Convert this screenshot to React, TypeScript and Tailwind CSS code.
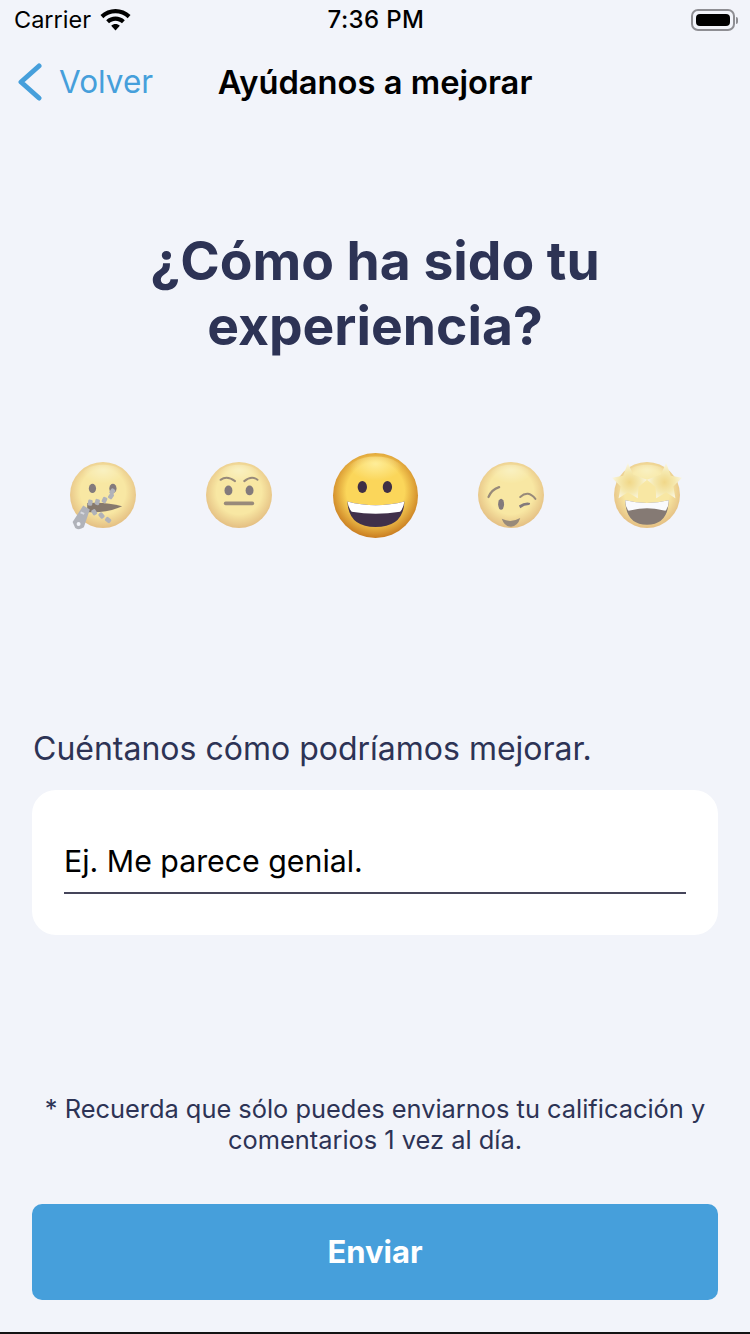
const Face = ({ children, id, top = "#fde06a", bottom = "#dc9c34" }: { children: React.ReactNode; id: string; top?: string; bottom?: string }) => (
  <svg viewBox="0 0 100 100" className="w-full h-full overflow-visible">
    <defs>
      <radialGradient id={id} cx="50%" cy="45%" r="55%">
        <stop offset="0%" stopColor={top} />
        <stop offset="62%" stopColor={top} />
        <stop offset="100%" stopColor={bottom} />
      </radialGradient>
      <radialGradient id={`${id}-shine`} cx="50%" cy="20%" r="45%">
        <stop offset="0%" stopColor="#fff3a8" stopOpacity="0.8" />
        <stop offset="100%" stopColor="#fff3a8" stopOpacity="0" />
      </radialGradient>
    </defs>
    <circle cx="50" cy="50" r="50" fill={`url(#${id})`} />
    <ellipse cx="50" cy="26" rx="36" ry="22" fill={`url(#${id}-shine)`} />
    {children}
  </svg>
)

const ZipperFace = () => (
  <Face id="zip">
    <ellipse cx="34" cy="40" rx="5.5" ry="7" fill="#3a2a2a" />
    <ellipse cx="65" cy="40" rx="5.5" ry="7" fill="#3a2a2a" />
    <path d="M26 62 Q55 60 79 67 Q55 78 26 76 Z" fill="#402810" />
    <g fill="#85878e">
      <rect x="61" y="40" width="7" height="9" rx="2" transform="rotate(35 64 44)" />
      <rect x="59" y="47" width="7" height="9" rx="2" transform="rotate(35 62 51)" />
      <rect x="49" y="53" width="7" height="9" rx="2" transform="rotate(25 52 57)" />
      <rect x="38" y="56" width="7" height="9" rx="2" transform="rotate(15 41 60)" />
      <rect x="27" y="57" width="7" height="9" rx="2" transform="rotate(10 30 62)" />
      <rect x="33" y="72" width="7" height="9" rx="2" transform="rotate(-30 36 76)" />
      <rect x="44" y="77" width="7" height="9" rx="2" transform="rotate(-40 47 81)" />
      <rect x="54" y="84" width="7" height="9" rx="2" transform="rotate(-50 57 88)" />
      <path d="M20 66 L30 72 L21 99 Q14 104 8 100 L4 91 Z" />
    </g>
    <circle cx="13" cy="94" r="3" fill="#f2f4fa" />
    <rect x="16" y="76" width="6" height="3" fill="#f2f4fa" opacity="0.6" transform="rotate(25 19 77)" />
  </Face>
)

const NeutralFace = () => (
  <Face id="neu">
    <path d="M22 27 Q32 20 44 29" fill="none" stroke="#5e4526" strokeWidth="3" strokeLinecap="round" />
    <path d="M58 29 Q69 20 78 27" fill="none" stroke="#5e4526" strokeWidth="3" strokeLinecap="round" />
    <ellipse cx="34" cy="43" rx="6" ry="7.5" fill="#3a2a2a" />
    <ellipse cx="66" cy="43" rx="6" ry="7.5" fill="#3a2a2a" />
    <rect x="27" y="60" width="46" height="5.5" rx="2.7" fill="#5e4526" />
  </Face>
)

const SmileFace = () => (
  <Face id="smile" top="#fbd65a" bottom="#c97c20">
    <ellipse cx="34.5" cy="40" rx="5.5" ry="7" fill="#3f2f45" />
    <ellipse cx="64" cy="40" rx="5.5" ry="7" fill="#3f2f45" />
    <path d="M17 57 Q50 66 84 57 Q83 87 50 87 Q18 87 17 57 Z" fill="#40304a" />
    <path d="M17 57 Q50 66 84 57 Q83 65 79 69 Q50 74 22 69 Q18 65 17 57 Z" fill="#ffffff" />
  </Face>
)

const WinkFace = () => (
  <Face id="wink">
    <path d="M16 53 Q20 42 32 38" fill="none" stroke="#5e4526" strokeWidth="3.5" strokeLinecap="round" />
    <path d="M64 53 Q76 42 87 56" fill="none" stroke="#5e4526" strokeWidth="3" strokeLinecap="round" />
    <ellipse cx="35" cy="64" rx="4.5" ry="8.5" fill="#3a2a2a" />
    <path d="M62 66 Q71 60 79 62 Q79 65 77 65 Q70 65 64 70 Z" fill="#3a2a2a" />
    <path d="M36 86 Q50 93 64 85 Q60 98 50 98 Q40 98 36 86 Z" fill="#5e4526" />
  </Face>
)

const StarFace = () => (
  <Face id="star">
    <path d="M17 58 Q50 66 83 58 Q82 95 50 95 Q18 95 17 58 Z" fill="#3d2a1c" />
    <path d="M17 58 Q50 66 83 58 Q83 68 78 74 Q50 66 22 74 Q17 68 17 58 Z" fill="#ffffff" />
    <defs>
      <radialGradient id="star-fill" cx="50%" cy="55%" r="55%">
        <stop offset="0%" stopColor="#f0c53e" />
        <stop offset="55%" stopColor="#f8e27e" />
        <stop offset="100%" stopColor="#fffbe6" />
      </radialGradient>
    </defs>
    <g fill="url(#star-fill)" strokeLinejoin="round">
      <path d="M-3 24 L14 21 L21 1 L29 19 L50 27 L37 38 L36 55 L21 46 L7 55 L10 37 Z" />
      <path d="M50 27 L71 19 L79 1 L86 21 L103 24 L90 37 L93 55 L79 46 L64 55 L63 38 Z" />
    </g>
  </Face>
)

const App = () => {
  return (
    <main className="relative flex flex-col w-[750px] h-[1334px] overflow-hidden bg-[#f2f4fa] font-['Inter',sans-serif] text-[#2d3355]">
      <header className="flex items-center justify-between h-[40px] pl-[14px] pr-[14px] text-black text-[23.5px] leading-none">
        <div className="flex-1 flex items-center gap-[9px]">
          <span>Carrier</span>
          <svg width="31" height="22" viewBox="0 0 31 22" fill="#000">
            <path d="M15.5 0 C21 0 26.5 2.2 30.5 6 L27.7 9.2 C24.4 6.1 20 4.3 15.5 4.3 C11 4.3 6.6 6.1 3.3 9.2 L.5 6 C4.5 2.2 10 0 15.5 0 Z" />
            <path d="M15.5 7.5 C18.9 7.5 22.2 8.8 24.8 11.2 L22 14.2 C20.2 12.6 17.9 11.7 15.5 11.7 C13.1 11.7 10.8 12.6 9 14.2 L6.2 11.2 C8.8 8.8 12.1 7.5 15.5 7.5 Z" />
            <path d="M15.5 15 C17.1 15 18.6 15.6 19.8 16.7 L15.5 21.4 L11.2 16.7 C12.4 15.6 13.9 15 15.5 15 Z" />
          </svg>
        </div>
        <span className="font-medium text-[24px] tracking-[0.4px]">7:36 PM</span>
        <div className="flex-1 flex justify-end items-center gap-[1px] -mr-[2px]">
          <div className="flex items-center w-[44px] h-[22px] p-[3px] rounded-[7px] border-2 border-[#8e8e93]">
            <div className="w-full h-full rounded-[4px] bg-black" />
          </div>
          <div className="w-[2px] h-[7px] rounded-r-full bg-[#8e8e93]" />
        </div>
      </header>

      <nav className="relative flex items-center justify-center h-[84px]">
        <div className="absolute left-[18px] top-[23px] flex items-center gap-[16px] text-[#469fdb] text-[31.5px] leading-none">
          <svg width="25" height="38" viewBox="0 0 25 38" fill="none" stroke="currentColor" strokeWidth="5" strokeLinecap="round" strokeLinejoin="round">
            <path d="M21 3 L3 19 L21 35" />
          </svg>
          <span>Volver</span>
        </div>
        <h2 className="text-black text-[32.7px] font-semibold leading-none">Ayúdanos a mejorar</h2>
      </nav>

      <h1 className="mt-[104px] text-center text-[53.4px] leading-[65px] font-bold">
        ¿Cómo ha sido tu
        <br />
        experiencia?
      </h1>

      <div className="grid grid-cols-5 items-center h-[86px] mt-[94px] px-[35px]">
        <div className="flex justify-center"><div className="w-[66px] h-[66px] opacity-60"><ZipperFace /></div></div>
        <div className="flex justify-center"><div className="w-[66px] h-[66px] opacity-60"><NeutralFace /></div></div>
        <div className="flex justify-center"><div className="w-[85px] h-[85px]"><SmileFace /></div></div>
        <div className="flex justify-center"><div className="w-[66px] h-[66px] opacity-60"><WinkFace /></div></div>
        <div className="flex justify-center"><div className="w-[66px] h-[66px] opacity-60"><StarFace /></div></div>
      </div>

      <p className="mt-[191px] pl-[33px] text-[32px] leading-[40px]">Cuéntanos cómo podríamos mejorar.</p>

      <div className="mx-[32px] mt-[21px] h-[145px] rounded-[24px] bg-white px-[32px] pt-[53px]">
        <div className="pb-[13px] border-b-2 border-[#45455a] text-black text-[30.3px] leading-[36px]">Ej. Me parece genial.</div>
      </div>

      <p className="mt-[158px] text-center text-[25.4px] leading-[31px]">
        * Recuerda que sólo puedes enviarnos tu calificación y
        <br />
        comentarios 1 vez al día.
      </p>

      <button className="mx-[32px] mt-[49px] h-[96px] rounded-[10px] bg-[#469fdb] text-white text-[31px] font-bold">Enviar</button>

      <div className="absolute left-0 right-0 bottom-0 h-[2px] bg-[#141414]" />
    </main>
  )
}

export default App
